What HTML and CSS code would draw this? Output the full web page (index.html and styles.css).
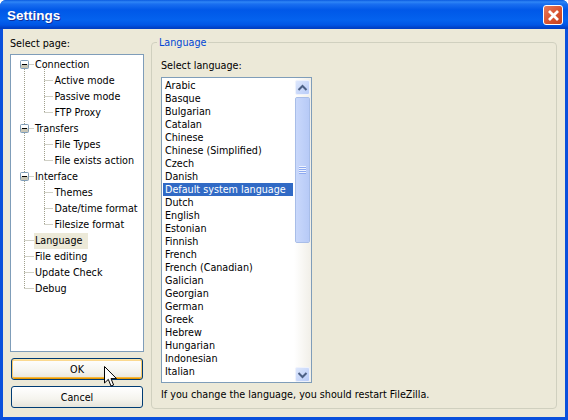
FILE: index.html
```html
<!DOCTYPE html>
<html lang="en">
<head>
<meta charset="utf-8">
<title>Settings</title>
<link rel="stylesheet" href="styles.css">
</head>
<body>
<div class="window">
  <header class="titlebar">
    <span class="title">Settings</span>
    <button class="close" aria-label="Close">
      <svg width="13" height="13" viewBox="0 0 13 13"><path d="M2 2 L11 11 M11 2 L2 11" stroke="#fff" stroke-width="2.8" fill="none"/></svg>
    </button>
  </header>
  <main class="content">
    <section class="left">
      <div class="label">Select page:</div>
      <div class="tree">
        <svg class="tree-lines" width="132" height="296" viewBox="0 0 132 296">
          <g stroke="#a0a08c" stroke-width="1" stroke-dasharray="1 1" fill="none">
            <path d="M13.5 14V233.5M13.5 9.5H23M13.5 73.5H23M13.5 121.5H23M13.5 185.5H23M13.5 201.5H23M13.5 217.5H23M13.5 233.5H23"/>
            <path d="M33.5 14V57.5M33.5 25.5H42M33.5 41.5H42M33.5 57.5H42"/>
            <path d="M33.5 78V105.5M33.5 89.5H42M33.5 105.5H42"/>
            <path d="M33.5 126V169.5M33.5 137.5H42M33.5 153.5H42M33.5 169.5H42"/>
          </g>
          <g class="exp" transform="translate(9 5)"><rect x=".5" y=".5" width="8" height="8" rx="1" fill="#c9c6b6" stroke="#7f9db9"/><rect x="1" y="1" width="7" height="3.5" fill="#fff"/><path d="M2 4.5H7" stroke="#000"/></g>
          <g class="exp" transform="translate(9 69)"><rect x=".5" y=".5" width="8" height="8" rx="1" fill="#c9c6b6" stroke="#7f9db9"/><rect x="1" y="1" width="7" height="3.5" fill="#fff"/><path d="M2 4.5H7" stroke="#000"/></g>
          <g class="exp" transform="translate(9 117)"><rect x=".5" y=".5" width="8" height="8" rx="1" fill="#c9c6b6" stroke="#7f9db9"/><rect x="1" y="1" width="7" height="3.5" fill="#fff"/><path d="M2 4.5H7" stroke="#000"/></g>
        </svg>
        <ul class="tree-list">
          <li class="node">Connection</li>
          <li class="node child">Active mode</li>
          <li class="node child">Passive mode</li>
          <li class="node child">FTP Proxy</li>
          <li class="node">Transfers</li>
          <li class="node child">File Types</li>
          <li class="node child">File exists action</li>
          <li class="node">Interface</li>
          <li class="node child">Themes</li>
          <li class="node child">Date/time format</li>
          <li class="node child">Filesize format</li>
          <li class="node"><span class="current">Language</span></li>
          <li class="node">File editing</li>
          <li class="node">Update Check</li>
          <li class="node">Debug</li>
        </ul>
      </div>
      <button class="btn default">OK</button>
      <button class="btn">Cancel</button>
    </section>
    <fieldset class="group">
      <legend class="legend">Language</legend>
      <div class="label">Select language:</div>
      <div class="listbox">
        <ul class="items">
          <li>Arabic</li><li>Basque</li><li>Bulgarian</li><li>Catalan</li><li>Chinese</li>
          <li>Chinese (Simplified)</li><li>Czech</li><li>Danish</li>
          <li class="selected">Default system language</li>
          <li>Dutch</li><li>English</li><li>Estonian</li><li>Finnish</li><li>French</li>
          <li>French (Canadian)</li><li>Galician</li><li>Georgian</li><li>German</li>
          <li>Greek</li><li>Hebrew</li><li>Hungarian</li><li>Indonesian</li><li>Italian</li>
        </ul>
        <div class="scrollbar">
          <div class="arrow">
            <svg width="11" height="8" viewBox="0 0 11 8"><path d="M1.5 6 L5.5 2 L9.5 6" stroke="#4d6185" stroke-width="2" fill="none"/></svg>
          </div>
          <div class="thumb"><span class="grip"></span></div>
          <div class="spacer"></div>
          <div class="arrow">
            <svg width="11" height="8" viewBox="0 0 11 8"><path d="M1.5 2 L5.5 6 L9.5 2" stroke="#4d6185" stroke-width="2" fill="none"/></svg>
          </div>
        </div>
      </div>
      <p class="note">If you change the language, you should restart FileZilla.</p>
    </fieldset>
  </main>
  <svg class="cursor" width="14" height="22" viewBox="0 0 14 22"><path d="M.5 .5V17L4.3 13.4L7 20L9.6 19L7 12.6H12.5Z" fill="#fff" stroke="#000" stroke-width="1"/></svg>
</div>
</body>
</html>
```
FILE: styles.css
```css
* { box-sizing: border-box; }
html, body { margin: 0; padding: 0; background: #fff; }
body { width: 568px; height: 420px; overflow: hidden; font: 10.7px/13px "DejaVu Sans Condensed", "DejaVu Sans", sans-serif; color: #000; }
ul { list-style: none; margin: 0; padding: 0; }

.window {
  position: relative;
  width: 568px; height: 420px;
  display: flex; flex-direction: column;
  background: #0a50dc;
  border-radius: 6px 6px 0 0;
  overflow: hidden;
}
.titlebar {
  height: 29px; flex: none;
  display: flex; align-items: center; justify-content: space-between;
  padding: 1px 5px 0 7px;
  background: linear-gradient(#0a5be0 0, #2f86f6 2px, #1a6ff0 4px, #0058e8 10px, #0462ee 20px, #0055e5 25px, #003fc4 28px);
}
.title { font: bold 13.5px/16px "Liberation Sans", sans-serif; color: #fff; text-shadow: 1px 1px 0 #0f2f9c; padding-top: 2px; }
.close {
  width: 20px; height: 20px; padding: 0;
  display: flex; align-items: center; justify-content: center;
  border: 1px solid #fff; border-radius: 3px;
  background: linear-gradient(135deg, #e67a5c, #d9532f 55%, #c4421f);
}
.content {
  flex: 1; min-height: 0;
  margin: 0 3px 3px;
  padding: 0 8px 0 7px;
  background: #ece9d8;
  display: flex; gap: 7px;
}
.left { width: 134px; flex: none; display: flex; flex-direction: column; padding-top: 8px; }
.label { height: 13px; }
.tree {
  position: relative;
  height: 298px; margin-top: 4px;
  background: #fff; border: 1px solid #7f9db9;
}
.tree-lines { position: absolute; left: 0; top: 0; }
.tree-list { position: relative; padding-top: 2px; }
.node { height: 16px; line-height: 16px; padding-left: 24px; white-space: nowrap; }
.node.child { padding-left: 43.5px; }
.current { display: inline-block; background: #ece9d8; padding: 0 1px; margin-left: -1px; width: 54px; }
.btn {
  display: block;
  width: 132px; height: 22px; margin: 6px 0 0 1px; padding: 0;
  font: inherit;
  border: 1px solid #003c74; border-radius: 3px;
  background: linear-gradient(#fff, #f5f4ee 60%, #e6e4da);
  color: #000;
}
.btn.default { box-shadow: inset 1px 0 0 #f8c96c, inset -1px 0 0 #f8c96c, inset 0 1px 0 #fde6a8, inset 0 2px 0 #fbd990, inset 0 -1px 0 #e59700, inset 0 -2px 0 #f6b73c; }
.group {
  flex: 1; min-width: 0;
  margin: 7px 0 8px; padding: 0 0 0 9px;
  border: 1px solid #d0d0bf; border-radius: 4px;
  display: block;
}
.legend { color: #0046d5; padding: 0 2px; margin-left: -4px; height: 13px; }
.group > .label { margin-top: 10px; }
.listbox {
  display: flex;
  width: 151px; height: 306px; margin-top: 5px;
  background: #fff; border: 1px solid #7f9db9;
}
.items { flex: 1; min-width: 0; padding: 1px 1px; overflow: hidden; }
.items li { height: 13px; padding-left: 2px; white-space: nowrap; }
.items .selected { background: #316ac5; color: #fff; }
.scrollbar {
  width: 17px; flex: none;
  display: flex; flex-direction: column; padding: 2px 0 0;
  background: linear-gradient(90deg, #fff, #f1efe8);
}
.arrow {
  height: 15px; flex: none; margin: 0 1px;
  display: flex; align-items: center; justify-content: center;
  border: 1px solid #eef2fc; border-radius: 2px;
  background: linear-gradient(135deg, #dde7fc, #b9ccf8);
}
.thumb {
  height: 146px; flex: none; margin: 2px 1px 0;
  display: flex; align-items: center; justify-content: center;
  border: 1px solid #f0f4fe; border-radius: 2px;
  outline: 1px solid #a8bde8; outline-offset: -1px;
  background: linear-gradient(90deg, #c9d8fb, #b7caf7);
}
.grip {
  width: 7px; height: 8px;
  background: repeating-linear-gradient(#eef3fe 0 1px, #8eaaf0 1px 2px);
}
.spacer { flex: 1; }
.note { margin: 5px 0 0; }
.cursor { position: absolute; left: 104px; top: 366px; }
```
